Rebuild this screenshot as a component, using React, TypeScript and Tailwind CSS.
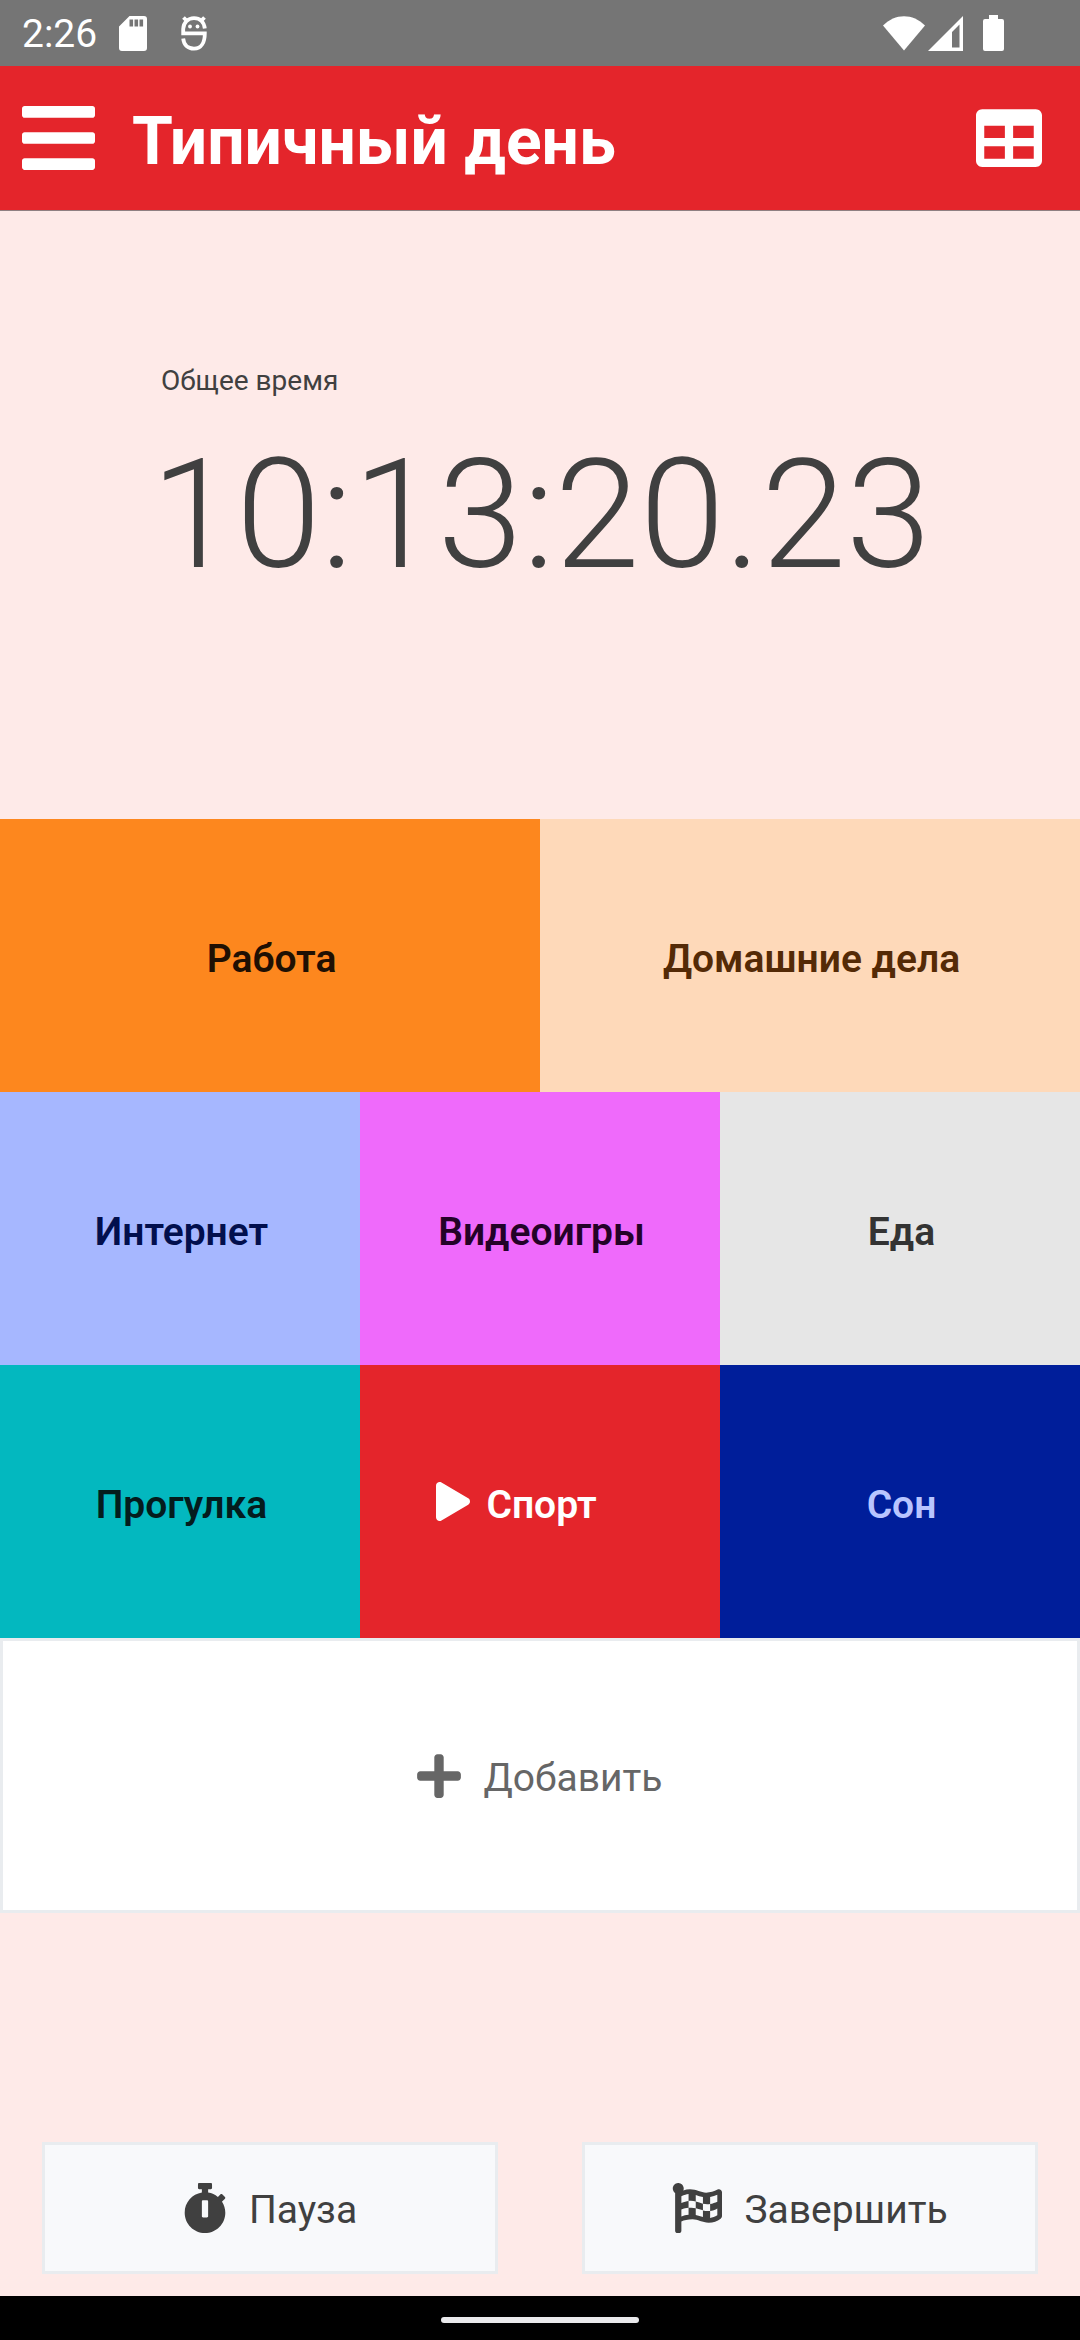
import React from "react";
import { FaBars, FaTable, FaPlay, FaPlus, FaStopwatch, FaFlagCheckered } from "react-icons/fa";

type Activity = { name: string; className: string; running?: boolean };

const rows: Activity[][] = [
  [
    { name: "Работа", className: "bg-[#fd871e] text-[#1f1003]" },
    { name: "Домашние дела", className: "bg-[#fed9b9] text-[#542a06]" },
  ],
  [
    { name: "Интернет", className: "bg-[#a6b7ff] text-[#020f4d]" },
    { name: "Видеоигры", className: "bg-[#ef6afb] text-[#240228]" },
    { name: "Еда", className: "bg-[#e6e6e6] text-[#333333]" },
  ],
  [
    { name: "Прогулка", className: "bg-[#03b8bf] text-[#041c1d]" },
    { name: "Спорт", className: "bg-[#e4252b] text-white", running: true },
    { name: "Сон", className: "bg-[#001e9a] text-[#b8c5ff]" },
  ],
];

function SdCardIcon() {
  return (
    <svg viewBox="0 0 28 35" className="h-[35px] w-7" aria-hidden="true">
      <path
        fill="#fff"
        fillRule="evenodd"
        d="M10.500 0H25a3 3 0 0 1 3 3v29a3 3 0 0 1-3 3H3a3 3 0 0 1-3-3V10.500zM10.500 3.500v7h3.600v-7zm5 0v7h3.600v-7zm5 0v7h3.600v-7z"
      />
    </svg>
  );
}

function BugIcon() {
  return (
    <svg viewBox="0 0 26 35" className="h-[35px] w-[26px]" fill="none" stroke="#fff" strokeWidth="3.800" aria-hidden="true">
      <path d="M23.800 12.500C23 6 19 2.200 13 2.200S2.500 6.500 2.200 13v4.400h21.600C23.800 26 20.500 32.600 13 32.600 7 32.600 2.800 29 2.200 22.500" />
      <path d="M2.500 1.500l4 4M23.500 1.500l-4 4" />
      <circle cx="9" cy="10.500" r="1.900" fill="#fff" stroke="none" />
      <circle cx="16.500" cy="10.500" r="1.900" fill="#fff" stroke="none" />
    </svg>
  );
}

function WifiIcon() {
  return (
    <svg viewBox="0 0 42 35" className="h-[35px] w-[42px]" aria-hidden="true">
      <path fill="#fff" d="M0 9.500C12-3 30-3 42 9.500L21 34.500z" />
    </svg>
  );
}

function SignalIcon() {
  return (
    <svg viewBox="0 0 35 35" className="h-[35px] w-[35px]" aria-hidden="true">
      <path fill="#fff" fillRule="evenodd" d="M35 0v35H0zM31.500 8.500L24 16v15.500h7.500z" />
    </svg>
  );
}

function BatteryIcon() {
  return (
    <svg viewBox="0 0 21 36" className="h-9 w-[21px]" aria-hidden="true">
      <path fill="#fff" d="M6 0h9v4h4a2 2 0 0 1 2 2v28a2 2 0 0 1-2 2H2a2 2 0 0 1-2-2V6a2 2 0 0 1 2-2h4z" />
    </svg>
  );
}

function StatusBar() {
  return (
    <div className="flex h-[66px] items-center justify-between bg-[#757575] pr-[76px] pl-[22px] text-white">
      <div className="flex items-center">
        <span className="w-[97px] pt-0.5 text-[39px] leading-[46px]">2:26</span>
        <SdCardIcon />
        <span className="w-[34px]" />
        <BugIcon />
      </div>
      <div className="flex items-center">
        <WifiIcon />
        <span className="w-[3px]" />
        <SignalIcon />
        <span className="w-5" />
        <BatteryIcon />
      </div>
    </div>
  );
}

export default function App() {
  return (
    <div className="flex min-h-screen flex-col bg-[#feeae8] font-['Roboto',sans-serif] text-[#404040]">
      <StatusBar />
      <header className="flex h-[145px] items-center border-b border-[#8f8082] bg-[#e4252b] pr-[38px] pl-[22px] text-white">
        <button type="button" aria-label="Меню">
          <FaBars className="h-[84px] w-[73px]" />
        </button>
        <h1 className="grow pt-2 pl-[37px] text-[66px] leading-[78px] font-bold">Типичный день</h1>
        <button type="button" aria-label="Таблица">
          <FaTable className="size-[66px]" />
        </button>
      </header>

      <main className="flex grow flex-col">
        <section className="flex h-[608px] flex-col items-center justify-center pb-[60px] pl-0.5">
          <div>
            <p className="pl-2.5 text-[28px] leading-8">Общее время</p>
            <p className="mt-7 text-[153px] leading-[180px] font-light">10:13:20.23</p>
          </div>
        </section>

        {rows.map((row) => (
          <div key={row[0].name} className="flex h-[273px]">
            {row.map((item) => (
              <button
                key={item.name}
                type="button"
                className={"flex flex-1 items-center justify-center gap-4 pt-1.5 pl-[3px] text-[39px] leading-[46px] font-semibold " + item.className}
              >
                {item.running && <FaPlay className="mb-1.5 h-[39px] w-[34px]" />}
                {item.name}
                {item.running && <span className="w-[34px]" />}
              </button>
            ))}
          </div>
        ))}

        <button
          type="button"
          className="flex h-[275px] items-center justify-center gap-[22px] border-[3px] border-[#e9ecef] bg-white text-[39px] leading-[46px] text-[#666666]"
        >
          <FaPlus className="h-[50px] w-11" />
          <span className="pt-1">Добавить</span>
        </button>

        <div className="mt-auto flex gap-[84px] px-[42px] pb-[22px]">
          <button
            type="button"
            className="flex h-[132px] flex-1 items-center justify-center gap-[22px] border-[3px] border-[#e9ecef] bg-[#f8f9fb] text-[39px] leading-[46px]"
          >
            <FaStopwatch className="h-[50px] w-11" />
            <span className="pt-1">Пауза</span>
          </button>
          <button
            type="button"
            className="flex h-[132px] flex-1 items-center justify-center gap-[22px] border-[3px] border-[#e9ecef] bg-[#f8f9fb] text-[39px] leading-[46px]"
          >
            <FaFlagCheckered className="size-[50px]" />
            <span className="pt-1">Завершить</span>
          </button>
        </div>
      </main>

      <div className="flex h-11 items-center justify-center bg-black pt-1">
        <div className="h-1.5 w-[198px] rounded-full bg-[#e9e9ec]" />
      </div>
    </div>
  );
}
